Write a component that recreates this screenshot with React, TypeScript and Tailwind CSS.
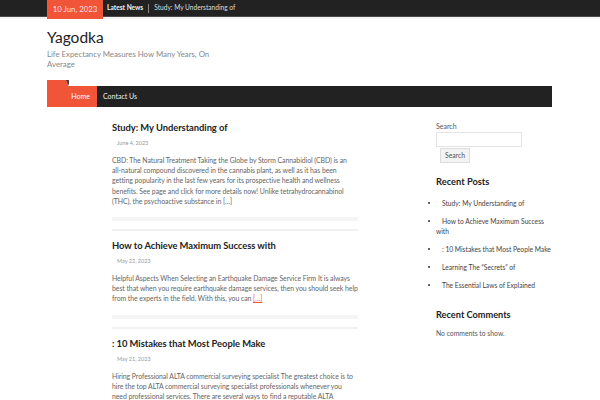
const posts = [
  {
    title: "Study: My Understanding of",
    date: "June 4, 2023",
    excerpt:
      "CBD: The Natural Treatment Taking the Globe by Storm Cannabidiol (CBD) is an all\u2011natural compound discovered in the cannabis plant, as well as it has been getting popularity in the last few years for its prospective health and wellness benefits. See page and click for more details now! Unlike tetrahydrocannabinol (THC), the psychoactive substance in",
    more: false,
  },
  {
    title: "How to Achieve Maximum Success with",
    date: "May 22, 2023",
    excerpt:
      "Helpful Aspects When Selecting an Earthquake Damage Service Firm It is always best that when you require earthquake damage services, then you should seek help from the experts in the field. With this, you can",
    more: true,
  },
  {
    title: ": 10 Mistakes that Most People Make",
    date: "May 21, 2023",
    excerpt:
      "Hiring Professional ALTA commercial surveying specialist The greatest choice is to hire the top ALTA commercial surveying specialist professionals whenever you need professional services. There are several ways to find a reputable ALTA commercial surveying specialist in your area",
    more: false,
  },
];

const recent = [
  "Study: My Understanding of",
  "How to Achieve Maximum Success with",
  ": 10 Mistakes that Most People Make",
  "Learning The \u201cSecrets\u201d of",
  "The Essential Laws of Explained",
];

export default function App() {
  return (
    <div
      className="h-[400px] w-[600px] overflow-hidden bg-white text-[#333]"
      style={{ fontFamily: "Lato, 'Noto Sans', sans-serif" }}
    >
      {/* Top bar */}
      <div className="h-[17px] border-b border-[#4a4a4a] bg-[#222]">
        <div className="ml-[47px] flex h-full items-start">
          <div className="relative z-10 flex h-[19px] w-[56px] items-center justify-center bg-[#f05537] text-[7.8px] text-[#fde]">
            10 Jun, 2023
          </div>
          <div className="ml-[4px] flex h-[16px] items-center text-[6.6px] text-[#eee]">
            <span className="font-bold">Latest News</span>
            <span className="mx-[5px] h-[9px] w-px bg-[#888]" />
            <span className="text-[#ddd]">Study: My Understanding of</span>
          </div>
        </div>
      </div>
      <div className="h-[2px] bg-[#f4f4f4]" />

      {/* Branding */}
      <div className="ml-[47px] mt-[8px]">
        <div className="text-[15.5px] leading-[20px] text-[#222]">Yagodka</div>
        <div className="mt-[2px] w-[185px] text-[7.8px] leading-[10px] text-[#888]">
          Life Expectancy Measures How Many Years, On Average
        </div>
      </div>

      {/* Navigation */}
      <div className="ml-[47px] mt-[17px] flex h-[21px] w-[505px] bg-[#222]">
        <div className="relative flex w-[50px] items-center justify-end bg-[#f05537] pr-[7px] text-[7px] text-white">
          <div className="absolute -top-[6px] left-0 h-[6px] w-[21px] bg-[#f05537]" />
          <div className="absolute -top-[6px] left-[19px] h-0 w-0 border-l-[3px] border-t-[6px] border-l-transparent border-t-[#444]" />
          Home
        </div>
        <div className="flex items-center pl-[6px] text-[7px] text-[#eee]">Contact Us</div>
      </div>

      {/* Content */}
      <div className="mt-[14px] flex">
        <main className="ml-[112px] w-[246px]">
          {posts.map((p, i) => (
            <article key={i}>
              <h2 className="text-[9.4px] font-bold leading-[14px] tracking-[-0.05px] text-[#222]">
                {p.title}
              </h2>
              <div className="mt-[4px] pl-[5px] text-[5.5px] leading-[8px] text-[#999]">{p.date}</div>
              <p className="mt-[8px] text-[6.9px] leading-[10.2px] tracking-[-0.055px] text-[#666]">
                {p.excerpt}{" "}
                {p.more ? (
                  <span className="text-[#f05537] underline">[&hellip;]</span>
                ) : (
                  <span>[&hellip;]</span>
                )}
              </p>
              <div className="mt-[11px] h-[4px] bg-[#f5f5f5]" />
              <div className="mb-[8px] mt-[8px] h-[2px] bg-[#f1f1f1]" />
            </article>
          ))}
        </main>

        <aside className="ml-[78px] w-[116px]">
          <div className="text-[7px] leading-[10px] text-[#555]">Search</div>
          <div className="mt-[1px] h-[15px] w-[86px] border border-[#e4e4e4] bg-white" />
          <button className="ml-[4px] mt-[1px] block h-[15px] w-[30px] border border-[#ddd] bg-[#f3f3f3] text-[6.8px] text-[#555]">
            Search
          </button>
          <h3 className="mt-[12px] text-[9.3px] font-bold leading-[14px] text-[#222]">Recent Posts</h3>
          <ul className="mt-[9px] text-[6.7px] leading-[10px] text-[#444]">
            {recent.map((r) => (
              <li key={r} className="relative mb-[8px]">
                <span className="absolute -left-[8px] top-[4px] h-[2px] w-[2px] rounded-full bg-[#333]" />
                <span className="inline-block w-[6px]" />
                {r}
              </li>
            ))}
          </ul>
          <h3 className="mt-[18px] text-[9.2px] font-bold leading-[14px] text-[#222]">Recent Comments</h3>
          <div className="mt-[6px] text-[6.8px] leading-[10px] text-[#555]">No comments to show.</div>
        </aside>
      </div>
    </div>
  );
}
